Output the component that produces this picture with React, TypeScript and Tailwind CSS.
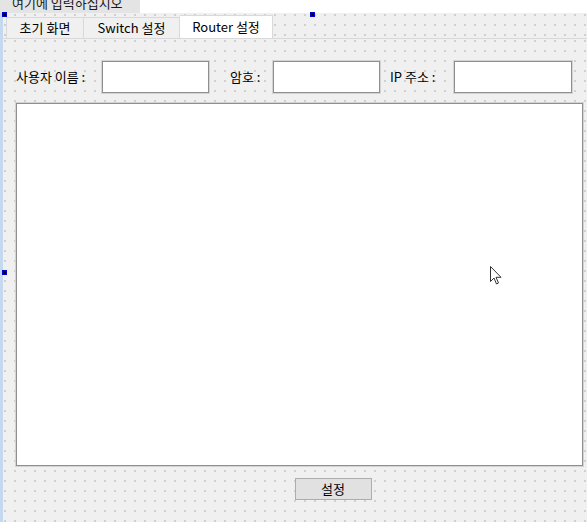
const dots =
  "bg-[#f0f0f0] bg-[radial-gradient(circle_at_2px_2px,#b8b8b8_0.55px,transparent_0.9px)] bg-[size:10px_10px]";

const TextBox = ({ w }: { w: string }) => (
  <div className={`${w} h-[32px] bg-white border border-[#8f8f8f] shadow-[0_0_0_1px_#d4d4d4]`} />
);

const Handle = ({ className }: { className: string }) => (
  <div className={`absolute w-[5px] h-[5px] bg-black border border-[#0000c8] ${className}`} />
);

const App = () => {
  return (
    <div
      className="relative w-[587px] h-[522px] overflow-hidden bg-white text-[13px] text-black"
      style={{ fontFamily: '"Noto Sans CJK KR", "Noto Sans", sans-serif' }}
    >
      {/* menu strip placeholder */}
      <div className="h-[13px] flex">
        <div className="w-[140px] h-[13px] bg-[#e4e4e4] overflow-hidden">
          <div className="pl-[12px] leading-[13px] -mt-[4px] whitespace-nowrap text-[#1a1a1a]">여기에 입력하십시오</div>
        </div>
      </div>

      <div className="flex h-[509px]">
        <div className="w-[3px] bg-[#c4d9f0]" />
        <div className="flex-1 flex flex-col">
          {/* tab strip */}
          <div className={`h-[25px] flex items-end pl-[3px] ${dots}`}>
            <div className="w-[78px] h-[21px] bg-[#f0f0f0] border border-b-0 border-[#d9d9d9] flex items-center justify-center">
              초기 화면
            </div>
            <div className="w-[96px] h-[21px] bg-[#f0f0f0] border border-l-0 border-b-0 border-[#d9d9d9] flex items-center justify-center">
              Switch 설정
            </div>
            <div className="w-[93px] h-[23px] bg-white border border-l-0 border-b-0 border-[#d9d9d9] flex items-center justify-center">
              Router 설정
            </div>
          </div>

          {/* tab page */}
          <div className={`flex-1 flex flex-col border-t border-[#d9d9d9] ${dots}`}>
            <div className="flex items-center mt-[22px] pl-[13px] h-[32px]">
              <div className="w-[86px] whitespace-nowrap">사용자 이름 :</div>
              <TextBox w="w-[107px]" />
              <div className="ml-[21px] w-[43px] whitespace-nowrap">암호 :</div>
              <TextBox w="w-[107px]" />
              <div className="ml-[10px] w-[64px] whitespace-nowrap">IP 주소 :</div>
              <TextBox w="w-[118px]" />
            </div>

            <div className="ml-[13px] mt-[10px] w-[567px] h-[363px] bg-white border border-[#8f8f8f] shadow-[0_0_0_1px_#d4d4d4]" />

            <div className="flex justify-center mt-[12px] pl-[76px]">
              <button className="w-[77px] h-[22px] bg-[#e1e1e1] border border-[#adadad] flex items-center justify-center">
                설정
              </button>
            </div>
          </div>
        </div>
      </div>

      <Handle className="left-[2px] top-[12px]" />
      <Handle className="left-[310px] top-[12px]" />
      <Handle className="left-[2px] top-[270px]" />

      {/* mouse pointer */}
      <svg className="absolute left-[490px] top-[266px]" width="13" height="20" viewBox="0 0 13 20">
        <path
          d="M0.5 0.5 L0.5 15.5 L4 12 L6.5 18 L8.5 17 L6 11.3 L11 11.3 Z"
          fill="white"
          stroke="#333"
          strokeWidth="1"
          strokeLinejoin="round"
        />
      </svg>
    </div>
  );
};

export default App;
